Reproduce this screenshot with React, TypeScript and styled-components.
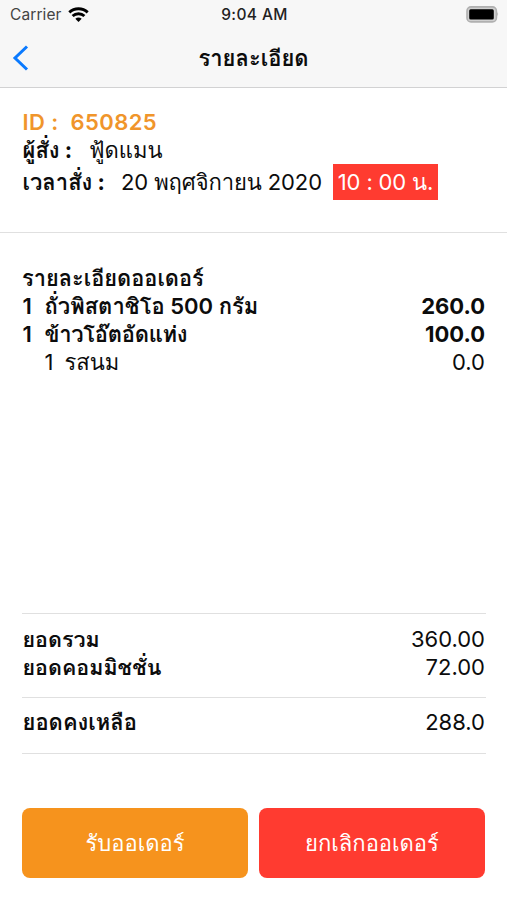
import React from "react";
import styled, { createGlobalStyle } from "styled-components";

const Global = createGlobalStyle`
  * { box-sizing: border-box; }
  body {
    margin: 0;
    background: #fff;
    color: #0c0c0c;
    font-family: Inter, Loma, "Noto Sans Thai Looped", "Noto Sans", sans-serif;
    font-size: 22px;
    line-height: 28px;
  }
`;

const Screen = styled.main`
  width: 507px;
  height: 900px;
  display: flex;
  flex-direction: column;
  overflow: hidden;
`;

const Header = styled.header`
  height: 88px;
  flex: none;
  background: #f7f7f7;
  border-bottom: 1px solid #d2d2d3;
`;

const StatusBar = styled.div`
  height: 29px;
  padding: 0 8px 0 10px;
  display: grid;
  grid-template-columns: 1fr auto 1fr;
  align-items: center;
  font-size: 15.5px;
  line-height: 29px;
`;

const Carrier = styled.div`
  display: flex;
  align-items: center;
  gap: 6px;
  color: #444;
  letter-spacing: 0.1px;
`;

const Clock = styled.time`
  font-weight: 500;
  letter-spacing: 0.4px;
  color: #222;
`;

const BatteryIcon = styled.svg`
  justify-self: end;
`;

const NavBar = styled.nav`
  height: 57px;
  padding: 0 12px;
  display: grid;
  grid-template-columns: 30px 1fr 30px;
  align-items: center;
`;

const BackButton = styled.button`
  display: flex;
  padding: 0;
  border: 0;
  background: none;
`;

const Title = styled.h1`
  margin: 0;
  text-align: center;
  font-size: 22px;
  line-height: 28px;
  font-weight: 700;
`;

const Summary = styled.section`
  height: 145px;
  flex: none;
  padding: 20px 22px 0;
  border-bottom: 1px solid #e0e0e0;
`;

const InfoRow = styled.div<{ $h?: number }>`
  display: flex;
  align-items: center;
  height: ${(p) => p.$h ?? 28}px;
  white-space: pre;
`;

const OrderId = styled.strong`
  color: #f0952b;
  font-weight: 600;
  letter-spacing: 0.4px;
  padding-left: 0.5px;
`;

const Label = styled.strong<{ $w?: number; $size?: number }>`
  font-size: ${(p) => p.$size ?? 21.5}px;
  font-weight: 700;
  padding-left: 0.5px;
  width: ${(p) => (p.$w ? `${p.$w}px` : "auto")};
`;

const DateText = styled.span`
  width: 212px;
  letter-spacing: -0.1px;
`;

const TimeBadge = styled.span`
  width: 105px;
  height: 36px;
  line-height: 36px;
  background: #ff3b30;
  color: #fff;
  text-align: center;
  letter-spacing: -0.15px;
`;

const Order = styled.section`
  flex: 1;
  padding: 31px 22px 0;
`;

const OrderHeading = styled.h2`
  margin: 0;
  font-size: 21.8px;
  line-height: 28px;
  font-weight: 700;
`;

const Item = styled.div<{ $sub?: boolean }>`
  display: grid;
  grid-template-columns: ${(p) => (p.$sub ? "20px" : "22px")} 1fr auto;
  height: ${(p) => (p.$sub ? 28 : 27.5)}px;
  padding-top: ${(p) => (p.$sub ? "1px" : "0")};
  padding-left: ${(p) => (p.$sub ? "22.5px" : "0.5px")};
  font-weight: ${(p) => (p.$sub ? 400 : 600)};
  font-size: 22px;
`;

const ItemName = styled.span<{ $tight?: boolean }>`
  letter-spacing: ${(p) => (p.$tight ? "-0.3px" : "normal")};
`;

const Amount = styled.span<{ $bold?: boolean }>`
  font-size: 22px;
  font-weight: ${(p) => (p.$bold ? 700 : 400)};
  text-align: right;
`;

const Totals = styled.section`
  margin: 0 21px 0 22px;
  border-top: 1px solid #e0e0e0;
`;

const TotalGroup = styled.div<{ $h: number; $top: number }>`
  height: ${(p) => p.$h}px;
  padding-top: ${(p) => p.$top}px;
  border-bottom: 1px solid #e0e0e0;
`;

const TotalRow = styled.div`
  display: flex;
  justify-content: space-between;
  height: 27.5px;
  padding-right: 1px;
`;

const Actions = styled.footer`
  display: grid;
  grid-template-columns: 1fr 1fr;
  gap: 11px;
  padding: 54px 22px 22px;
`;

const ActionButton = styled.button<{ $color: string }>`
  height: 70px;
  padding: 0;
  border: 0;
  border-radius: 8px;
  background: ${(p) => p.$color};
  color: #fff;
  font: inherit;
`;

const items = [
  { qty: 1, name: "ถั่วพิสตาชิโอ 500 กรัม", price: "260.0" },
  { qty: 1, name: "ข้าวโอ๊ตอัดแท่ง", price: "100.0", tight: true },
  { qty: 1, name: "รสนม", price: "0.0", sub: true },
];

export default function App() {
  return (
    <Screen>
      <Global />
      <Header>
        <StatusBar>
          <Carrier>
            Carrier
            <svg width="21" height="16" viewBox="0 0 21 16" fill="none" stroke="#000" strokeWidth="2.9">
              <path d="M1.3 5.4C6.4.6 14.6.6 19.7 5.4" />
              <path d="M4.6 9C7.9 5.9 13.1 5.9 16.4 9" />
              <path d="M10.5 14.9 7.3 11.7Q10.5 9.1 13.7 11.7Z" fill="#000" stroke="none" />
            </svg>
          </Carrier>
          <Clock>9:04 AM</Clock>
          <BatteryIcon width="33" height="17" viewBox="0 0 33 17">
            <rect x="1" y="0.9" width="29.4" height="15" rx="4" fill="#cfcfcf" stroke="#b0b0b0" strokeWidth="1.6" />
            <rect x="3.2" y="3.2" width="24.6" height="10.2" rx="1.5" fill="#000" />
            <path d="M31.4 6Q33 8.2 31.4 10.5Z" fill="#a5a5a5" />
          </BatteryIcon>
        </StatusBar>
        <NavBar>
          <BackButton aria-label="ย้อนกลับ">
            <svg width="17" height="26" viewBox="0 0 17 26" fill="none" stroke="#0a7aff" strokeWidth="3">
              <path d="M15 1.5 3 13 15 24.5" />
            </svg>
          </BackButton>
          <Title>รายละเอียด</Title>
        </NavBar>
      </Header>
      <Summary>
        <InfoRow>
          <OrderId>ID :  650825</OrderId>
        </InfoRow>
        <InfoRow>
          <Label $w={67} $size={22}>ผู้สั่ง :</Label>
          <span>ฟู้ดแมน</span>
        </InfoRow>
        <InfoRow $h={36}>
          <Label $w={99} $size={22}>เวลาสั่ง :</Label>
          <DateText>20 พฤศจิกายน 2020</DateText>
          <TimeBadge>10 : 00 น.</TimeBadge>
        </InfoRow>
      </Summary>
      <Order>
        <OrderHeading>รายละเอียดออเดอร์</OrderHeading>
        {items.map((item) => (
          <Item key={item.name} $sub={item.sub}>
            <span>{item.qty}</span>
            <ItemName $tight={item.tight}>{item.name}</ItemName>
            <Amount $bold={!item.sub}>{item.price}</Amount>
          </Item>
        ))}
      </Order>
      <Totals>
        <TotalGroup $h={84} $top={11}>
          <TotalRow>
            <Label>ยอดรวม</Label>
            <Amount>360.00</Amount>
          </TotalRow>
          <TotalRow>
            <Label>ยอดคอมมิชชั่น</Label>
            <Amount>72.00</Amount>
          </TotalRow>
        </TotalGroup>
        <TotalGroup $h={56} $top={10}>
          <TotalRow>
            <Label $size={22}>ยอดคงเหลือ</Label>
            <Amount>288.0</Amount>
          </TotalRow>
        </TotalGroup>
      </Totals>
      <Actions>
        <ActionButton $color="#f6931d">รับออเดอร์</ActionButton>
        <ActionButton $color="#ff3b30">ยกเลิกออเดอร์</ActionButton>
      </Actions>
    </Screen>
  );
}
